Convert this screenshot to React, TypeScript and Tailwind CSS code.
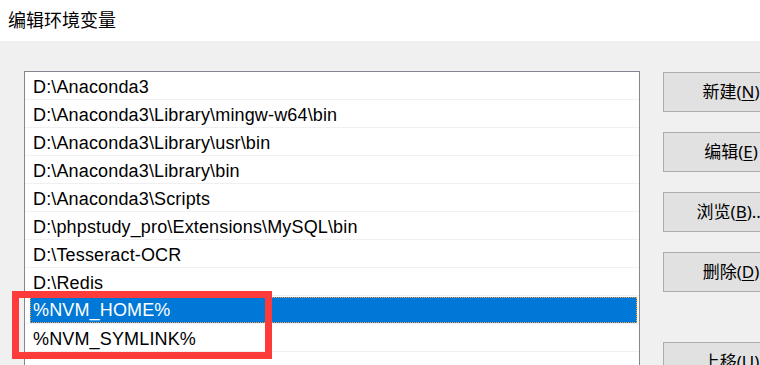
import React from "react";

const paths = [
  "D:\\Anaconda3",
  "D:\\Anaconda3\\Library\\mingw-w64\\bin",
  "D:\\Anaconda3\\Library\\usr\\bin",
  "D:\\Anaconda3\\Library\\bin",
  "D:\\Anaconda3\\Scripts",
  "D:\\phpstudy_pro\\Extensions\\MySQL\\bin",
  "D:\\Tesseract-OCR",
  "D:\\Redis",
  "%NVM_HOME%",
  "%NVM_SYMLINK%",
  "",
];

const SELECTED = 8;

const font = { fontFamily: '"Noto Sans", "Noto Sans CJK SC", sans-serif' };
const listFont = { fontFamily: '"Liberation Sans", "Noto Sans CJK SC", sans-serif' };

function Btn({ label, mnemonic, suffix = "", className = "" }: { label: string; mnemonic: string; suffix?: string; className?: string }) {
  return (
    <div
      className={
        "w-[136px] h-[40px] shrink-0 border border-[#adadad] bg-[#e1e1e1] flex items-center justify-center text-[17px] text-black " +
        className
      }
    >
      <span>
        {label}(<span className="underline underline-offset-2">{mnemonic}</span>){suffix}
      </span>
    </div>
  );
}

export default function App() {
  return (
    <div className="w-[760px] h-[365px] overflow-hidden bg-[#f0f0f0] flex flex-col relative" style={font}>
      <div className="h-[41px] shrink-0 bg-white flex items-center pl-[8px] text-[18px] text-black">
        编辑环境变量
      </div>

      <div className="flex items-start pt-[30px] pl-[24px]">
        <div className="w-[616px] h-[320px] shrink-0 border border-[#828790] bg-white" style={listFont}>
          {paths.map((p, i) =>
            i === SELECTED ? (
              <div key={i} className="h-[28px] border-b border-[#f0f0f0] pl-[5px] pr-[2px] pt-px">
                <div className="h-[26px] bg-[#0078d7] border border-dotted border-[#f0a040] flex items-center pl-[2px] pt-px text-[18px] tracking-[0.15px] text-white">
                  {p}
                </div>
              </div>
            ) : (
              <div key={i} className="h-[28px] border-b border-[#f0f0f0] flex items-center pl-[8px] pt-[3px] text-[18px] tracking-[0.15px] text-black">
                {p}
              </div>
            )
          )}
        </div>

        <div className="flex flex-col gap-5 ml-[23px] pt-px">
          <Btn label="新建" mnemonic="N" />
          <Btn label="编辑" mnemonic="E" />
          <Btn label="浏览" mnemonic="B" suffix="..." />
          <Btn label="删除" mnemonic="D" />
          <Btn label="上移" mnemonic="U" className="mt-[30px]" />
        </div>
      </div>

      <div className="absolute left-[12px] top-[291px] w-[260px] h-[68px] border-[7px] border-[#fd3b3b]" />
    </div>
  );
}
